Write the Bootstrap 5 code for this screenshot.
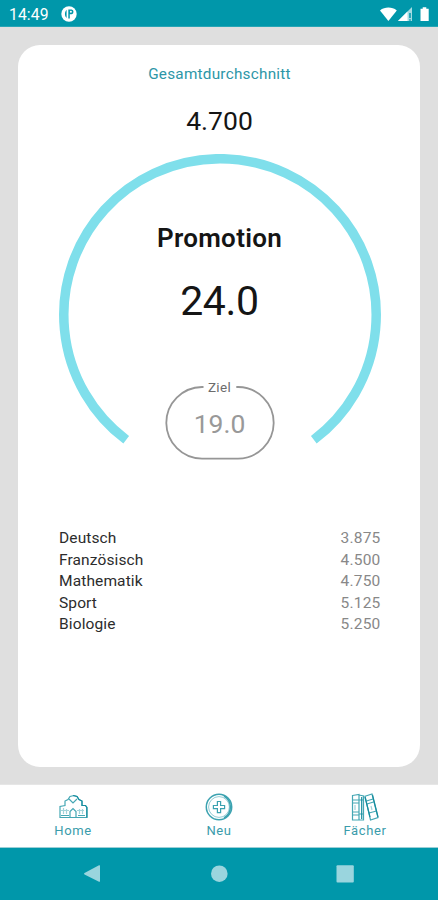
<!DOCTYPE html>
<html lang="de">
<head>
<meta charset="utf-8">
<meta name="viewport" content="width=device-width, initial-scale=1">
<title>Gesamtdurchschnitt</title>
<link href="https://cdn.jsdelivr.net/npm/bootstrap@5.3.0/dist/css/bootstrap.min.css" rel="stylesheet">
<style>
:root { --teal: #0097aa; }
body { font-family: Roboto, sans-serif; background: #dfdfdf; color: #151515; overflow: hidden; }
.status-bar { background: var(--teal); height: 27px; padding: 2px 8px 0 9px; font-size: 15.7px; line-height: 27px; border-bottom: 1px solid #27a5b5; letter-spacing: .1px; }
.notice { margin-left: 12px; }
.page-area { padding: 17.5px 18px 17.5px; }
.sheet { background: #fff; border-radius: 22px; padding: 17.5px 39.5px 0 40.5px; }
.overall-label { color: #2d96a7; font-size: 15.3px; line-height: 24px; letter-spacing: .25px; }
.overall-value { font-size: 26.5px; line-height: 32px; margin-top: 18.5px; }
.gauge { width: 322px; height: 322px; margin-top: 17.5px; }
.gauge-arc { left: 0; top: 0; }
.gauge-title { font-size: 26px; line-height: 32px; font-weight: 600; padding-top: 67.5px; letter-spacing: .3px; }
.gauge-value { font-size: 41px; line-height: 48px; margin-top: 23.5px; letter-spacing: -.3px; }
.goal { width: 109px; height: 80px; margin: 53.5px auto 0; color: #999; }
.goal-label { font-size: 13.5px; line-height: 16px; color: #6c6c6c; letter-spacing: .3px; }
.goal-value { font-size: 26.5px; line-height: 32px; margin-top: 13px; }
.grades { font-size: 15.5px; line-height: 21.5px; margin-top: 52px; color: #2c2c2c; letter-spacing: .12px; padding-left: .5px; }
.grades .grade { color: #888; letter-spacing: .2px; }
.tabs { height: 64px; background: #fff; border-top: 1px solid #e6e6e6; border-bottom: 1px solid #9ccfd6; color: #3a9cab; font-size: 13px; line-height: 16px; letter-spacing: .6px; padding-top: 7px; }
.tabs svg { display: block; margin-bottom: 1px; }
.system-nav { height: 52px; background: var(--teal); }
</style>
</head>
<body class="d-flex flex-column vh-100">
<header class="status-bar d-flex align-items-center text-white">
  <span>14:49</span>
  <svg class="notice" width="16" height="16" viewBox="0 0 16 16"><circle cx="8" cy="8" r="7.7" fill="#fff"/><path d="M5.600 3.800C3.400 6 3.400 10 5.600 12zM7.300 3.400h3.400q1.800.3 1.800 2.300T10.700 8.200H8.800v4.300H7.300z" fill="#0097aa"/><circle cx="9.900" cy="5.800" r="1" fill="#fff"/></svg>
  <svg class="ms-auto" width="51" height="17" viewBox="0 0 51 17"><path d="M1 4.400C5.800.6 13 .6 17.800 4.400L9.400 15z" fill="#fff"/><path d="M19 15 33 1v14z" fill="#fff" fill-opacity=".65"/><path d="M19 15 28.500 5.500V15z" fill="#fff"/><path d="M31 7v5M31 13.200v1.500" stroke="#0097aa" stroke-width="1.500"/><path d="M43.700 1.200h3.600v1.500h2.400V15h-8.200V2.700h2.200z" fill="#fff"/></svg>
</header>
<main class="page-area flex-grow-1 d-flex">
  <section class="sheet w-100">
    <div class="overall-label text-center">Gesamtdurchschnitt</div>
    <div class="overall-value text-center">4.700</div>
    <div class="gauge position-relative text-center">
      <svg class="gauge-arc position-absolute" width="322" height="322" viewBox="0 0 322 322"><path d="M67.200 285.800A156.200 156.200 0 1 1 254.800 285.800" fill="none" stroke="#7fdfeb" stroke-width="9.500"/><path d="M144.500 233H143A36 36 0 0 0 107.300 269A36 36 0 0 0 143 304.600H179A36 36 0 0 0 214.700 269A36 36 0 0 0 179 233H177.300" fill="none" stroke="#969696" stroke-width="1.800"/></svg>
      <div class="position-relative">
        <div class="gauge-title">Promotion</div>
        <div class="gauge-value">24.0</div>
        <div class="goal">
          <div class="goal-label">Ziel</div>
          <div class="goal-value">19.0</div>
        </div>
      </div>
    </div>
    <div class="grades">
      <div class="d-flex justify-content-between"><span>Deutsch</span><span class="grade">3.875</span></div>
      <div class="d-flex justify-content-between"><span>Französisch</span><span class="grade">4.500</span></div>
      <div class="d-flex justify-content-between"><span>Mathematik</span><span class="grade">4.750</span></div>
      <div class="d-flex justify-content-between"><span>Sport</span><span class="grade">5.125</span></div>
      <div class="d-flex justify-content-between"><span>Biologie</span><span class="grade">5.250</span></div>
    </div>
  </section>
</main>
<nav class="tabs row g-0 text-center">
  <div class="col d-flex flex-column align-items-center">
    <svg width="30" height="30" viewBox="0 0 30 30" fill="none" stroke="#45a7b4" stroke-width="1.200"><path d="M2 25.500V14.500l5-1V9l3-1.500 2-3 4-1 3 1 2 3 3 1.500v4.500h3.500l1.500 2v10z"/><path d="M12 25v-5.500l3-3 3 3V25M11 7l4 4 4-4M3 23.500h8M20 23.500h7"/><path d="M5.500 16v6M8.500 17v5M21.500 17v5M24.500 17v5M3 18.500h8M19 18.500h7" stroke-opacity=".5"/><path d="M15 3.500l4 1 2 3 3 1.500v4.500h3.500l1.300 2v10" stroke="#168d9f"/></svg>
    <span>Home</span>
  </div>
  <div class="col d-flex flex-column align-items-center">
    <svg width="30" height="30" viewBox="0 0 30 30" fill="none" stroke="#3ba2b0"><circle cx="15" cy="15" r="12.700" stroke-width="1.500"/><circle cx="15" cy="15" r="10.400" stroke-opacity=".55"/><path d="M13.400 9.500h3.200v4h4v3.200h-4v4h-3.200v-4h-4v-3.200h4z" stroke-width="1.200"/><path d="M20 4a12.700 12.700 0 0 1 0 22" stroke-width="1.600"/></svg>
    <span>Neu</span>
  </div>
  <div class="col d-flex flex-column align-items-center">
    <svg width="30" height="30" viewBox="0 0 30 30" fill="none" stroke="#45a7b4" stroke-width="1.200"><path d="M2.500 3.500 9 2.500v25.500H2.500zM9 3l4.500 1v24H9zM15 4.200l7-2.200 6 23.500-7.500 2.500z"/><path d="M3 8h6M3 11h6M3 20h6M3 23h6M9 8h4.500M9 22h4.500M16.500 9l6.500-2M17 12l6.500-2M19 21l7.500-2"/><path d="M11.700 5v22M15 5l5 20M22.500 3l5.500 22" stroke="#168d9f"/><path d="M5 13v5M21 14l1 4" stroke-opacity=".5"/></svg>
    <span>Fächer</span>
  </div>
</nav>
<footer class="system-nav">
  <svg class="d-block" width="438" height="52" viewBox="0 0 438 52" fill="#9ad5de"><path d="M84.500 25 99 17.300q1-.5 1 .7v15q0 1.200-1 .7L84.500 26.500q-1-.7 0-1.500z"/><circle cx="219.300" cy="25.700" r="8.300"/><rect x="336.500" y="17.300" width="17.300" height="17.300" rx="1"/></svg>
</footer>
<script src="https://cdn.jsdelivr.net/npm/bootstrap@5.3.0/dist/js/bootstrap.bundle.min.js"></script>
</body>
</html>
